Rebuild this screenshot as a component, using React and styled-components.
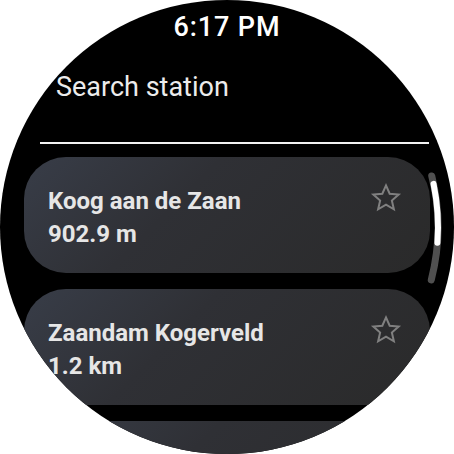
import React from 'react';
import styled, {createGlobalStyle} from 'styled-components';

const GlobalStyle = createGlobalStyle`
  html, body {
    margin: 0;
    padding: 0;
    background: #ffffff;
  }
  body {
    font-family: Roboto, "Noto Sans", sans-serif;
  }
`;

const Face = styled.div`
  position: relative;
  width: 454px;
  height: 454px;
  border-radius: 50%;
  overflow: hidden;
  background: #000000;
  display: flex;
  flex-direction: column;

  & > * {
    flex-shrink: 0;
  }
`;

const Clock = styled.div`
  height: 60px;
  padding-top: 11px;
  box-sizing: border-box;
  text-align: center;
  color: #ffffff;
  font-size: 27px;
  font-weight: 500;
  line-height: 32px;
  letter-spacing: 0.9px;
`;

const SearchLabel = styled.div`
  margin-top: 11px;
  padding-left: 56px;
  height: 32px;
  color: #ececec;
  font-size: 27px;
  line-height: 32px;
  font-weight: 400;
`;

const Divider = styled.div`
  margin: 39px 25px 0 40px;
  height: 2px;
  background: #f2f2f2;
`;

const List = styled.div`
  display: flex;
  flex-direction: column;
  gap: 16px;
  padding: 13px 24px 0 24px;
`;

const Card = styled.div`
  flex: none;
  height: 116px;
  border-radius: 42px;
  background: linear-gradient(135deg, #383d48 0%, #2f3035 38%, #2a2a2a 100%);
  display: flex;
  align-items: flex-start;
  justify-content: space-between;
  padding: 29px 28px 0 24px;
  box-sizing: border-box;
`;

const Info = styled.div`
  display: flex;
  flex-direction: column;
  gap: 3px;
`;

const Name = styled.div`
  color: #e6e6e6;
  font-size: 24px;
  font-weight: 700;
  line-height: 30px;
`;

const Distance = styled(Name)``;

const StarButton = styled.div`
  margin-top: -4px;
  width: 32px;
  height: 32px;
  display: flex;
  align-items: center;
  justify-content: center;
`;

const ScrollOverlay = styled.svg`
  position: absolute;
  left: 0;
  top: 0;
  pointer-events: none;
`;

const Star = () => (
  <svg width="32" height="32" viewBox="0 0 24 24" fill="none">
    <path
      d="M12 2.6l2.75 6.2 6.75.6-5.1 4.5 1.5 6.6L12 17.05 6.1 20.5l1.5-6.6-5.1-4.5 6.75-.6z"
      stroke="#808080"
      strokeWidth="1.5"
      strokeLinejoin="miter"
    />
  </svg>
);

const arcPoint = (deg, r) => {
  const a = (deg * Math.PI) / 180;
  return [227 + r * Math.cos(a), 227 + r * Math.sin(a)];
};

const arc = (from, to, r) => {
  const [x1, y1] = arcPoint(from, r);
  const [x2, y2] = arcPoint(to, r);
  return `M${x1} ${y1} A${r} ${r} 0 0 1 ${x2} ${y2}`;
};

const stations = [
  {name: 'Koog aan de Zaan', distance: '902.9 m'},
  {name: 'Zaandam Kogerveld', distance: '1.2 km'},
];

const App = () => {
  return (
    <>
      <GlobalStyle />
      <Face>
        <Clock>6:17 PM</Clock>
        <SearchLabel>Search station</SearchLabel>
        <Divider />
        <List>
          {stations.map(s => (
            <Card key={s.name}>
              <Info>
                <Name>{s.name}</Name>
                <Distance>{s.distance}</Distance>
              </Info>
              <StarButton>
                <Star />
              </StarButton>
            </Card>
          ))}
          {/* next card only peeks in at the bottom edge */}
          <Card />
        </List>
        <ScrollOverlay width="454" height="454" viewBox="0 0 454 454">
          <path d={arc(-14, 14.5, 211)} stroke="#505050" strokeWidth="7" strokeLinecap="round" fill="none" />
          <path d={arc(-11.8, 4.3, 211)} stroke="#ffffff" strokeWidth="6" strokeLinecap="round" fill="none" />
        </ScrollOverlay>
      </Face>
    </>
  );
};

export default App;
